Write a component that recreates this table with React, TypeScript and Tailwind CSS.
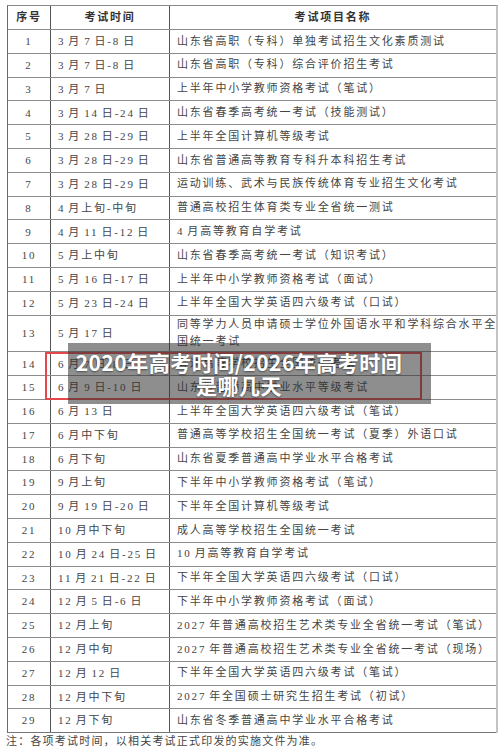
import React from "react";

type Row = { n: string; d: string; t: React.ReactNode; tall?: boolean };

const rows: Row[] = [
  { n: "1", d: "3 月 7 日-8 日", t: "山东省高职（专科）单独考试招生文化素质测试" },
  { n: "2", d: "3 月 7 日-8 日", t: "山东省高职（专科）综合评价招生考试" },
  { n: "3", d: "3 月 7 日", t: "上半年中小学教师资格考试（笔试）" },
  { n: "4", d: "3 月 14 日-24 日", t: "山东省春季高考统一考试（技能测试）" },
  { n: "5", d: "3 月 28 日-29 日", t: "上半年全国计算机等级考试" },
  { n: "6", d: "3 月 28 日-29 日", t: "山东省普通高等教育专科升本科招生考试" },
  { n: "7", d: "3 月 28 日-29 日", t: "运动训练、武术与民族传统体育专业招生文化考试" },
  { n: "8", d: "4 月上旬-中旬", t: "普通高校招生体育类专业全省统一测试" },
  { n: "9", d: "4 月 11 日-12 日", t: "4 月高等教育自学考试" },
  { n: "10", d: "5 月上中旬", t: "山东省春季高考统一考试（知识考试）" },
  { n: "11", d: "5 月 16 日-17 日", t: "上半年中小学教师资格考试（面试）" },
  { n: "12", d: "5 月 23 日-24 日", t: "上半年全国大学英语四六级考试（口试）" },
  {
    n: "13",
    d: "5 月 17 日",
    t: (
      <>
        同等学力人员申请硕士学位外国语水平和学科综合水平全
        <br />
        国统一考试
      </>
    ),
    tall: true,
  },
  { n: "14", d: "6 月 7 日-8 日", t: "普通高等学校招生全国统一考试" },
  { n: "15", d: "6 月 9 日-10 日", t: "山东省普通高中学业水平等级考试" },
  { n: "16", d: "6 月 13 日", t: "上半年全国大学英语四六级考试（笔试）" },
  { n: "17", d: "6 月中下旬", t: "普通高等学校招生全国统一考试（夏季）外语口试" },
  { n: "18", d: "6 月下旬", t: "山东省夏季普通高中学业水平合格考试" },
  { n: "19", d: "9 月上旬", t: "下半年中小学教师资格考试（笔试）" },
  { n: "20", d: "9 月 19 日-20 日", t: "下半年全国计算机等级考试" },
  { n: "21", d: "10 月中下旬", t: "成人高等学校招生全国统一考试" },
  { n: "22", d: "10 月 24 日-25 日", t: "10 月高等教育自学考试" },
  { n: "23", d: "11 月 21 日-22 日", t: "下半年全国大学英语四六级考试（口试）" },
  { n: "24", d: "12 月 5 日-6 日", t: "下半年中小学教师资格考试（面试）" },
  { n: "25", d: "12 月上旬", t: "2027 年普通高校招生艺术类专业全省统一考试（笔试）" },
  { n: "26", d: "12 月中旬", t: "2027 年普通高校招生艺术类专业全省统一考试（现场）" },
  { n: "27", d: "12 月 12 日", t: "下半年全国大学英语四六级考试（笔试）" },
  { n: "28", d: "12 月中下旬", t: "2027 年全国硕士研究生招生考试（初试）" },
  { n: "29", d: "12 月下旬", t: "山东省冬季普通高中学业水平合格考试" },
];

export default function App() {
  return (
    <div className="relative w-[500px] h-[748px] bg-white overflow-hidden font-['Liberation_Serif','Noto_Sans_CJK_SC',serif] text-[11px] text-[#454545] tracking-[1.8px] [word-spacing:-1.5px]">
      <div className="pt-[5px] pl-[7px]">
        <div className="w-[491px] border-l border-t border-r-2 border-l-[#6a6a6a] border-t-[#8a8a8a] border-r-[#c4c4c4]">
          {/* header */}
          <div className="flex h-[24px] border-b border-[#8c8c8c] font-bold text-[#333]">
            <div className="w-[43px] shrink-0 border-r border-[#555] flex items-center justify-center">序号</div>
            <div className="w-[119px] shrink-0 border-r border-[#555] flex items-center justify-center">考试时间</div>
            <div className="flex-1 flex items-center justify-center">考试项目名称</div>
          </div>
          {rows.map((r, i) => (
            <div
              key={r.n}
              className={
                "flex border-b " +
                (i === rows.length - 1 ? "border-[#777] " : "border-[#8c8c8c] ") +
                (r.tall ? "h-[36.8px]" : "h-[23.8px]")
              }
            >
              <div className="w-[43px] shrink-0 border-r border-[#555] flex items-center justify-center">{r.n}</div>
              <div className="w-[119px] shrink-0 border-r border-[#555] flex items-center pl-[7px] whitespace-nowrap">{r.d}</div>
              <div className="flex-1 flex items-center pl-[7px] whitespace-nowrap leading-[17.5px]">
                <div>{r.t}</div>
              </div>
            </div>
          ))}
        </div>
        <div className="pt-[1px] -ml-[1px] leading-[14px] tracking-[1.2px]">注：各项考试时间，以相关考试正式印发的实施文件为准。</div>
      </div>

      {/* red annotation box */}
      <div className="absolute left-[45px] top-[352px] w-[377px] h-[48px] border-2 border-[#e5484a]" />

      {/* title overlay */}
      <div className="absolute left-[68px] top-[343px] w-[363px] h-[61px] bg-[rgba(50,50,50,0.55)] flex flex-col items-center justify-center pr-[21px] font-['Noto_Sans_CJK_SC',sans-serif] font-bold text-white text-[21px] leading-[23px] tracking-[0.5px] [word-spacing:0px] [text-shadow:0_1px_2px_rgba(0,0,0,0.45)]">
        <span className="block whitespace-nowrap">2020年高考时间/2026年高考时间</span>
        <span className="block whitespace-nowrap">是哪几天</span>
      </div>
    </div>
  );
}
